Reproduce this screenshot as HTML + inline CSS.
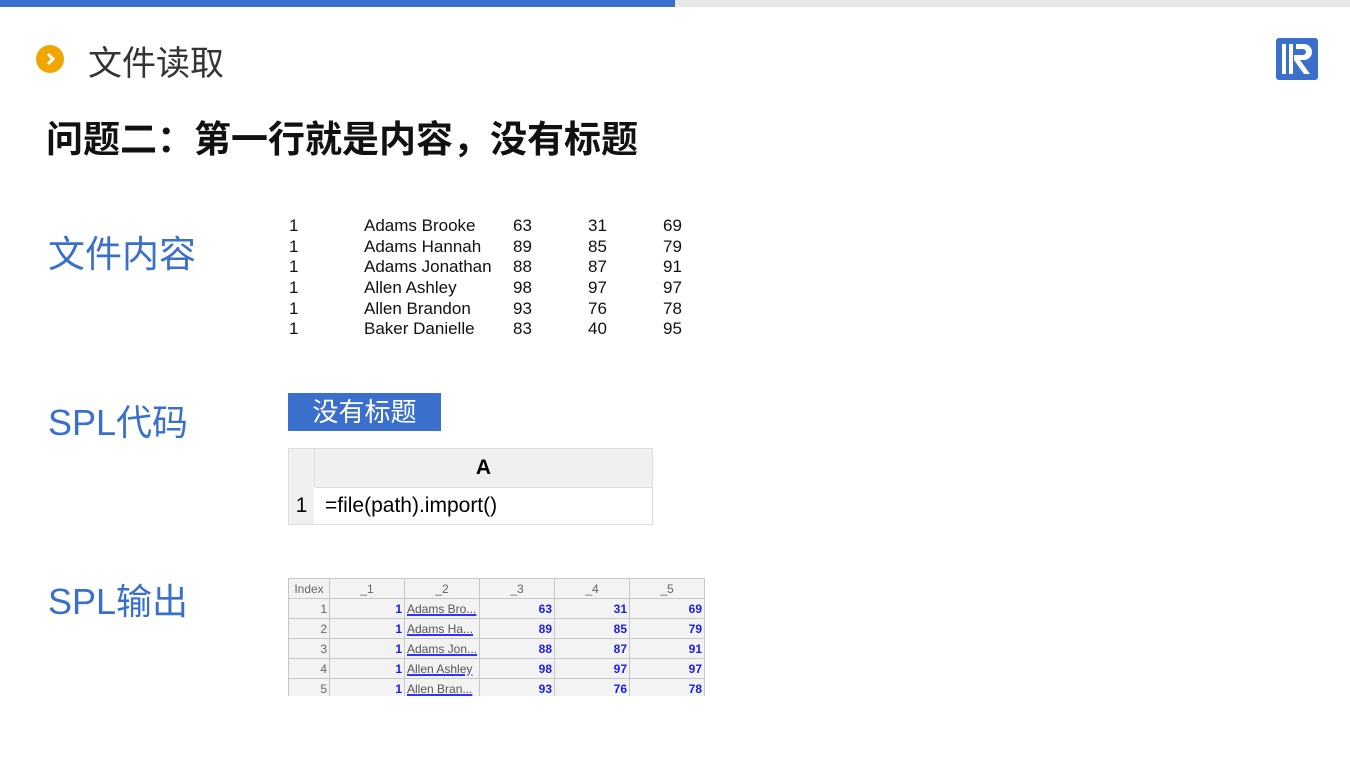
<!DOCTYPE html><html><head><meta charset="utf-8"><style>
body{margin:0;width:1350px;height:759px;position:relative;background:#fff;font-family:"Liberation Sans","Noto Sans CJK SC",sans-serif;overflow:hidden}
.a{position:absolute;white-space:nowrap}
.lbl{color:#3a6fcc;font-size:37px}
.ft td{padding:0;height:20.6px;font-size:17px;color:#111}
table{border-collapse:collapse}
.o td{border:1px solid #c8c8c8;font-size:12px;height:19px;padding:0 2px;text-align:right;background:#f3f3f3;color:#1a1aee;font-weight:bold}
.o tr:first-child td{text-align:center;color:#666;font-weight:normal}
.o td.i{color:#666;font-weight:normal}
.o td.n{text-align:left;color:#555;font-weight:normal;text-decoration:underline;text-decoration-color:#3333ff;text-decoration-thickness:2px}
</style></head><body>
<div class="a" style="left:0;top:0;width:675px;height:7px;background:#3a6fcc"></div>
<div class="a" style="left:675px;top:0;width:675px;height:7px;background:#e8e8e8"></div>
<div class="a" style="left:36px;top:45px;width:28px;height:28px;border-radius:50%;background:#f0a500"></div>
<svg class="a" style="left:36px;top:45px" width="28" height="28"><path d="M12 9l5 5-5 5" stroke="#fff" stroke-width="3" fill="none"/></svg>
<div class="a" style="left:88px;top:36px;font-size:34px;color:#333">文件读取</div>
<svg class="a" style="left:1276px;top:38px" width="42" height="42"><rect width="42" height="42" rx="3" fill="#3a6fcc"/><rect x="6" y="6" width="4" height="30" fill="#fff"/><rect x="13" y="6" width="4" height="30" fill="#fff"/><path d="M20 6h8a8 8 0 0 1 0 16h-4l10 14h-6l-10-14V17h9a3 3 0 0 0 0-6h-7z" fill="#fff"/></svg>
<div class="a" style="left:46px;top:109px;font-size:37px;font-weight:bold;color:#111">问题二：第一行就是内容，没有标题</div>
<div class="a lbl" style="left:48px;top:224px">文件内容</div>
<div class="a lbl" style="left:48px;top:394px;font-size:36px">SPL代码</div>
<div class="a lbl" style="left:48px;top:573px;font-size:36px">SPL输出</div>
<table class="a ft" style="left:289px;top:216px">
<tr><td style="width:75px">1</td><td style="width:149px">Adams Brooke</td><td style="width:75px">63</td><td style="width:75px">31</td><td>69</td></tr>
<tr><td>1</td><td>Adams Hannah</td><td>89</td><td>85</td><td>79</td></tr>
<tr><td>1</td><td>Adams Jonathan</td><td>88</td><td>87</td><td>91</td></tr>
<tr><td>1</td><td>Allen Ashley</td><td>98</td><td>97</td><td>97</td></tr>
<tr><td>1</td><td>Allen Brandon</td><td>93</td><td>76</td><td>78</td></tr>
<tr><td>1</td><td>Baker Danielle</td><td>83</td><td>40</td><td>95</td></tr>
</table>
<div class="a" style="left:288px;top:393px;width:153px;height:38px;background:#3a6fcc;color:#fff;font-size:26px;line-height:38px;text-align:center">没有标题</div>
<div class="a" style="left:288px;top:448px;width:365px;height:77px;border:1px solid #ddd;box-sizing:border-box">
<div class="a" style="left:0;top:0;width:25px;height:38px;background:#f0f0f0;border-right:1px solid #ddd"></div>
<div class="a" style="left:26px;top:0;right:0;height:38px;background:#f0f0f0;border-bottom:1px solid #ddd;text-align:center;line-height:38px;font-size:21px;font-weight:bold">A</div>
<div class="a" style="left:0;top:38px;width:25px;height:37px;background:#f0f0f0;text-align:center;line-height:37px;font-size:21px">1</div>
<div class="a" style="left:36px;top:38px;line-height:37px;font-size:21px">=file(path).import()</div>
</div>
<div class="a" style="left:288px;top:578px;width:418px;height:118px;overflow:hidden">
<table class="o">
<tr><td style="width:36px">Index</td><td style="width:70px">_1</td><td style="width:70px">_2</td><td style="width:70px">_3</td><td style="width:70px">_4</td><td style="width:70px">_5</td></tr>
<tr><td class="i">1</td><td>1</td><td class="n">Adams Bro...</td><td>63</td><td>31</td><td>69</td></tr>
<tr><td class="i">2</td><td>1</td><td class="n">Adams Ha...</td><td>89</td><td>85</td><td>79</td></tr>
<tr><td class="i">3</td><td>1</td><td class="n">Adams Jon...</td><td>88</td><td>87</td><td>91</td></tr>
<tr><td class="i">4</td><td>1</td><td class="n">Allen Ashley</td><td>98</td><td>97</td><td>97</td></tr>
<tr><td class="i">5</td><td>1</td><td class="n">Allen Bran...</td><td>93</td><td>76</td><td>78</td></tr>
</table></div>
</body></html>
